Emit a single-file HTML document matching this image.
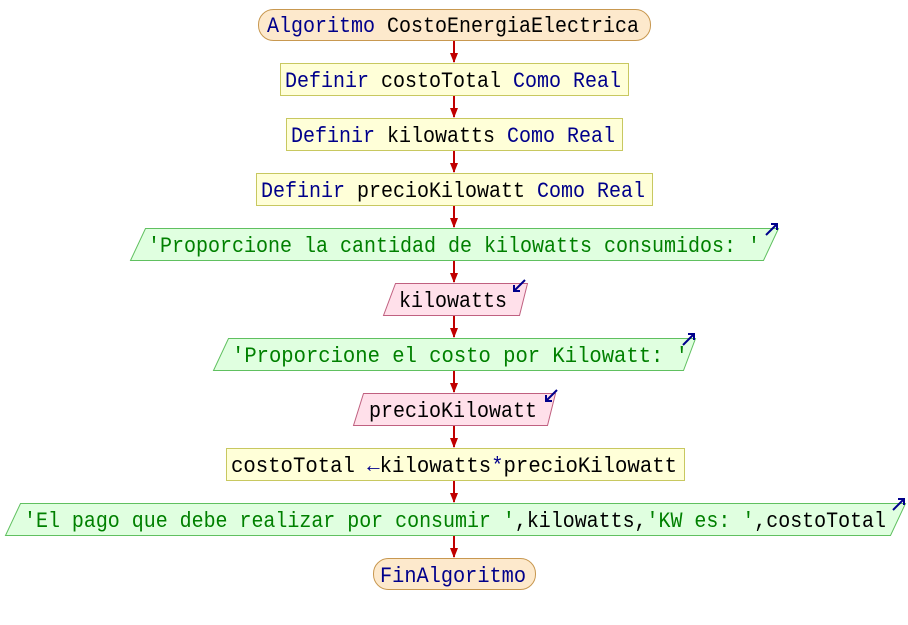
<!DOCTYPE html>
<html><head><style>
html,body{margin:0;padding:0;background:#fff;width:908px;height:625px;overflow:hidden}
text{font-family:"Liberation Mono","DejaVu Sans Mono",monospace;font-size:22px}
.k{fill:#00008b}.v{fill:#000}.s{fill:#008000}
</style></head><body>
<svg width="908" height="625" viewBox="0 0 908 625" xmlns="http://www.w3.org/2000/svg">
<defs><marker id="a" markerWidth="10" markerHeight="8" refX="9" refY="4" orient="auto" markerUnits="userSpaceOnUse"><path d="M0,0 L10,4 L0,8 Z" fill="#c00000"/></marker></defs>
<g stroke="#c00000" stroke-width="2" marker-end="url(#a)">
<line x1="454" y1="40" x2="454" y2="62"/>
<line x1="454" y1="95" x2="454" y2="117"/>
<line x1="454" y1="150" x2="454" y2="172"/>
<line x1="454" y1="205" x2="454" y2="227"/>
<line x1="454" y1="260" x2="454" y2="282"/>
<line x1="454" y1="315" x2="454" y2="337"/>
<line x1="454" y1="370" x2="454" y2="392"/>
<line x1="454" y1="425" x2="454" y2="447"/>
<line x1="454" y1="480" x2="454" y2="502"/>
<line x1="454" y1="535" x2="454" y2="557"/>
</g>
<rect x="258.5" y="9.5" width="392" height="31" rx="15" fill="#fde9cc" stroke="#c89850"/>
<text x="267" y="32" textLength="372" lengthAdjust="spacingAndGlyphs"><tspan class="k">Algoritmo</tspan><tspan class="v"> CostoEnergiaElectrica</tspan></text>
<rect x="280.5" y="63.5" width="348" height="32" fill="#ffffd8" stroke="#c8c860"/>
<text x="285" y="87" textLength="336" lengthAdjust="spacingAndGlyphs"><tspan class="k">Definir</tspan><tspan class="v"> costoTotal </tspan><tspan class="k">Como Real</tspan></text>
<rect x="286.5" y="118.5" width="336" height="32" fill="#ffffd8" stroke="#c8c860"/>
<text x="291" y="142" textLength="324" lengthAdjust="spacingAndGlyphs"><tspan class="k">Definir</tspan><tspan class="v"> kilowatts </tspan><tspan class="k">Como Real</tspan></text>
<rect x="256.5" y="173.5" width="396" height="32" fill="#ffffd8" stroke="#c8c860"/>
<text x="261" y="197" textLength="384" lengthAdjust="spacingAndGlyphs"><tspan class="k">Definir</tspan><tspan class="v"> precioKilowatt </tspan><tspan class="k">Como Real</tspan></text>
<polygon points="145.5,228.5 778.5,228.5 763.5,260.5 130.5,260.5" fill="#e0ffe0" stroke="#60c060"/>
<text x="148" y="252" class="s" textLength="612" lengthAdjust="spacingAndGlyphs">'Proporcione la cantidad de kilowatts consumidos: '</text>
<polygon points="395.5,283.5 527.5,283.5 519.5,315.5 383.5,315.5" fill="#ffe0ea" stroke="#c06080"/>
<text x="399" y="307" class="v" textLength="108" lengthAdjust="spacingAndGlyphs">kilowatts</text>
<polygon points="228.5,338.5 695.5,338.5 683.5,370.5 213.5,370.5" fill="#e0ffe0" stroke="#60c060"/>
<text x="232" y="362" class="s" textLength="456" lengthAdjust="spacingAndGlyphs">'Proporcione el costo por Kilowatt: '</text>
<polygon points="363.5,393.5 555.5,393.5 547.5,425.5 353.5,425.5" fill="#ffe0ea" stroke="#c06080"/>
<text x="369" y="417" class="v" textLength="168" lengthAdjust="spacingAndGlyphs">precioKilowatt</text>
<rect x="226.5" y="448.5" width="458" height="32" fill="#ffffd8" stroke="#c8c860"/>
<text x="231" y="472" textLength="446" lengthAdjust="spacingAndGlyphs"><tspan class="v">costoTotal </tspan><tspan class="k">←</tspan><tspan class="v">kilowatts</tspan><tspan class="k">*</tspan><tspan class="v">precioKilowatt</tspan></text>
<polygon points="20.5,503.5 905.5,503.5 890.5,535.5 5.5,535.5" fill="#e0ffe0" stroke="#60c060"/>
<text x="24" y="527" textLength="862" lengthAdjust="spacingAndGlyphs"><tspan class="s">'El pago que debe realizar por consumir '</tspan><tspan class="v">,kilowatts,</tspan><tspan class="s">'KW es: '</tspan><tspan class="v">,costoTotal</tspan></text>
<rect x="373.5" y="558.5" width="162" height="31" rx="15" fill="#fde9cc" stroke="#c89850"/>
<text x="380" y="582" class="k" textLength="146" lengthAdjust="spacingAndGlyphs">FinAlgoritmo</text>
<g stroke="#00008b" stroke-width="2" fill="none">
<path d="M766,235 L777,224 M771,224 L777,224 L777,230"/>
<path d="M683,345 L694,334 M688,334 L694,334 L694,340"/>
<path d="M893,510 L904,499 M898,499 L904,499 L904,505"/>
<path d="M525,280 L514,291 M514,285 L514,291 L520,291"/>
<path d="M557,390 L546,401 M546,395 L546,401 L552,401"/>
</g>
</svg>
</body></html>
